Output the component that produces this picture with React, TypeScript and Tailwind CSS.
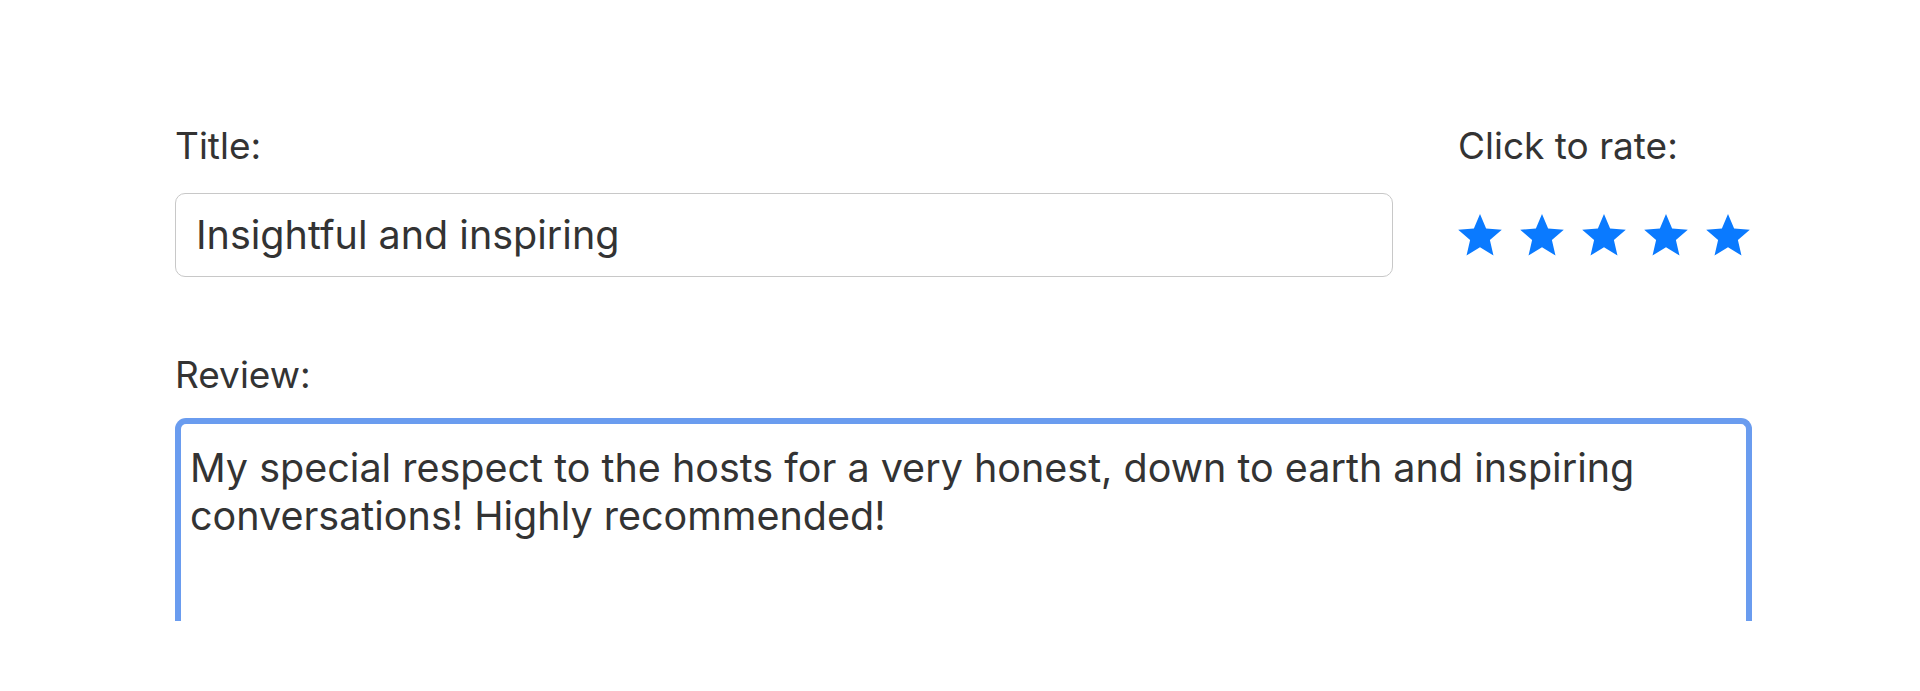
import { useState } from "react";

function Star({ filled }: { filled: boolean }) {
  return (
    <svg width="44" height="42" viewBox="2 2 20 19.27" className={filled ? "text-[#0a7aff]" : "text-[#c7c7cc]"}>
      <path
        fill="currentColor"
        d="M12 17.27L18.18 21l-1.64-7.03L22 9.24l-7.19-.61L12 2 9.19 8.63 2 9.24l5.46 4.73L5.82 21z"
      />
    </svg>
  );
}

export default function App() {
  const [title, setTitle] = useState("Insightful and inspiring");
  const [review, setReview] = useState(
    "My special respect to the hosts for a very honest, down to earth and inspiring conversations! Highly recommended!"
  );
  const [rating, setRating] = useState(5);

  return (
    <div className="min-h-screen bg-white text-[#333] font-['Inter','Liberation_Sans',sans-serif] text-[37px] leading-[44px]">
      <div className="pl-[175px] pr-[168px] pt-[124px]">
        {/* Title + rating */}
        <div className="grid grid-cols-[1218px_1fr] gap-x-[65px] items-center">
          <label className="mb-[25px]">Title:</label>
          <span className="mb-[25px]">Click to rate:</span>
          <input
            className="h-[84px] w-full rounded-[10px] border-[1.5px] border-[#c8c8c8] bg-white px-[20px] text-[39.5px] text-[#333] outline-none"
            value={title}
            onChange={(e) => setTitle(e.target.value)}
          />
          <div className="flex gap-[18px]">
            {[1, 2, 3, 4, 5].map((n) => (
              <button key={n} onClick={() => setRating(n)}>
                <Star filled={n <= rating} />
              </button>
            ))}
          </div>
        </div>

        {/* Review */}
        <div className="mt-[76px]">
          <label className="block mb-[21px]">Review:</label>
          <textarea
            className="block h-[203px] w-full resize-none rounded-t-[11px] border-[6px] border-b-0 border-[#6a9cef] bg-white pl-[9px] pr-[9px] pt-[20px] text-[39.5px] leading-[48px] text-[#333] outline-none"
            value={review}
            onChange={(e) => setReview(e.target.value)}
          />
        </div>
      </div>
    </div>
  );
}
